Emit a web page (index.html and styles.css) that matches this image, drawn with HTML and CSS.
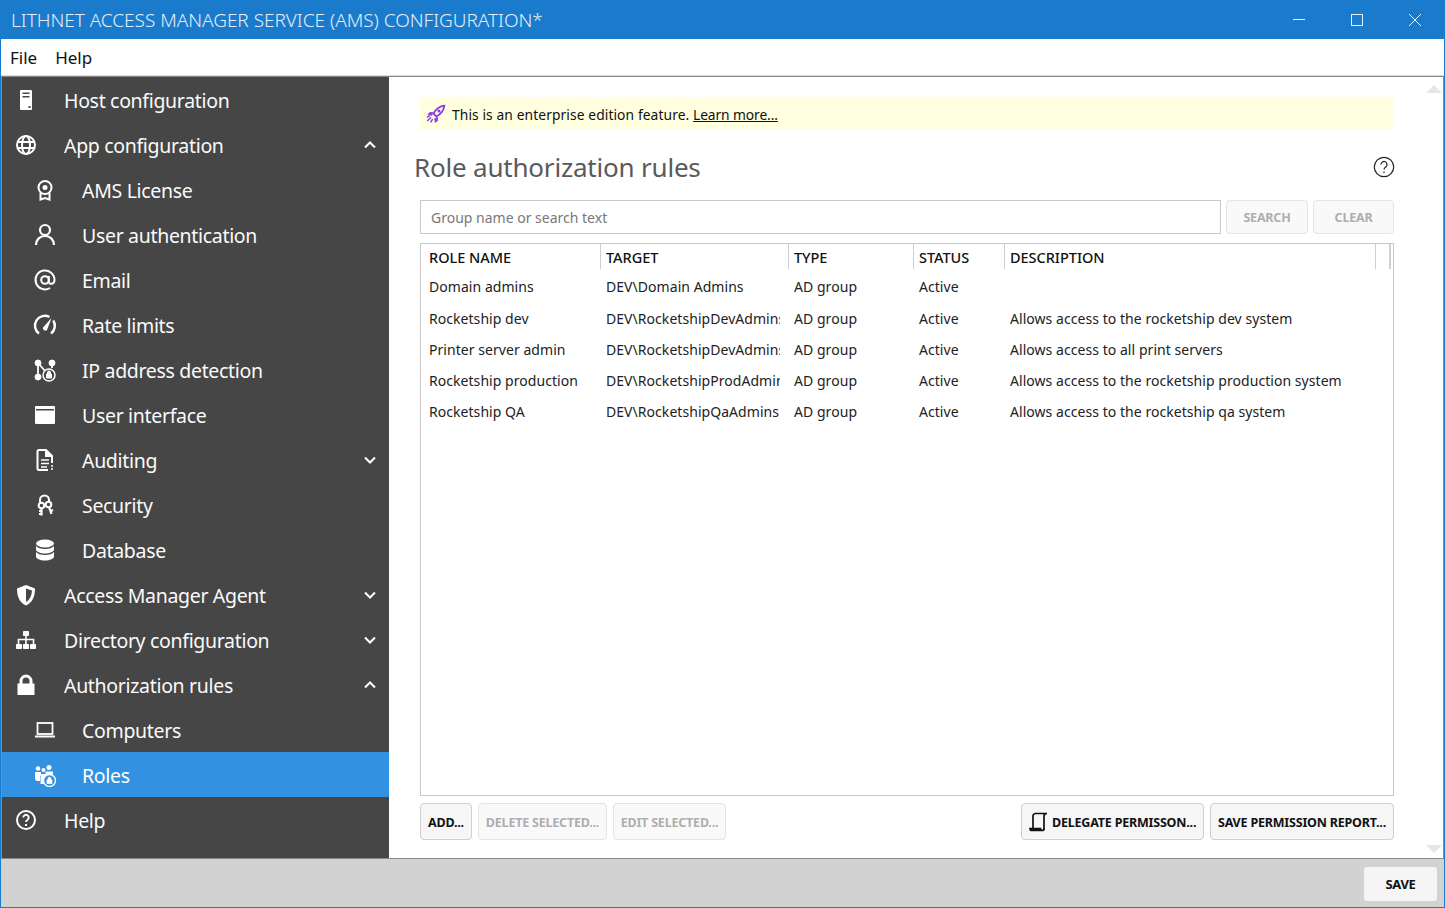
FILE: index.html
```html
<!DOCTYPE html>
<html lang="en">
<head>
  <meta charset="UTF-8">
  <title>Lithnet Access Manager Service (AMS) Configuration</title>
  <link rel="stylesheet" href="styles.css">
</head>
<body>
  <div class="window">
    <header class="titlebar">
      <span class="title">LITHNET ACCESS MANAGER SERVICE (AMS) CONFIGURATION*</span>
      <div class="window-btns">
        <svg width="58" height="40" viewBox="0 0 58 40"><path d="M23 19.500h12" stroke="#e6f0fa" fill="none"/></svg>
        <svg width="58" height="40" viewBox="0 0 58 40"><rect x="23.500" y="14.500" width="11" height="11" stroke="#e6f0fa" fill="none"/></svg>
        <svg width="58" height="40" viewBox="0 0 58 40"><path d="M23 14l12 12M35 14L23 26" stroke="#e6f0fa" fill="none"/></svg>
      </div>
    </header>
    <nav class="menu"><span>File</span><span>Help</span></nav>

    <div class="frame">
      <aside class="sidebar">
        <div class="nav-row">
          <svg class="nav-icon" viewBox="0 0 24 24"><path fill="#fff" fill-rule="evenodd" d="M7 2h10a1 1 0 0 1 1 1v18a1 1 0 0 1-1 1H7a1 1 0 0 1-1-1V3a1 1 0 0 1 1-1zM8.500 4.500v1.500h7V4.500zM8.500 8v1.500h7V8zM14.500 18v2h2v-2z"/></svg>
          <span>Host configuration</span>
        </div>
        <div class="nav-row">
          <svg class="nav-icon" viewBox="0 0 24 24" fill="none" stroke="#fff" stroke-width="2"><circle cx="12" cy="12" r="9"/><ellipse cx="12" cy="12" rx="4" ry="9"/><path d="M3 9h18M3 15h18"/></svg>
          <span>App configuration</span>
          <svg class="chev" viewBox="0 0 14 10"><path d="M2 7.500l5-5 5 5" /></svg>
        </div>
        <div class="nav-row sub">
          <svg class="nav-icon" viewBox="0 0 24 24" fill="none" stroke="#fff" stroke-width="2"><circle cx="12" cy="9.500" r="6.500"/><circle cx="12" cy="9.500" r="2.500" fill="#fff" stroke="none"/><path d="M7.500 15v6.500l4.500-1.500 4.500 1.500V15"/></svg>
          <span>AMS License</span>
        </div>
        <div class="nav-row sub">
          <svg class="nav-icon" viewBox="0 0 24 24" fill="none" stroke="#fff" stroke-width="2.200"><circle cx="12" cy="7" r="5"/><path d="M3 22c0-5 3.500-9 9-9s9 4 9 9"/></svg>
          <span>User authentication</span>
        </div>
        <div class="nav-row sub">
          <svg class="nav-icon" viewBox="0 0 24 24" fill="none" stroke="#fff" stroke-width="2"><circle cx="12" cy="12" r="3.800"/><path d="M15.800 8v5.500c0 3.500 5.700 3 5.700-1.500a9.500 9.500 0 1 0-4.500 8"/></svg>
          <span>Email</span>
        </div>
        <div class="nav-row sub">
          <svg class="nav-icon" viewBox="0 0 24 24" fill="none" stroke="#fff" stroke-width="2.400"><path d="M6 20.500a9.800 9.800 0 0 1 10.500-16.500M20.300 7.500a9.800 9.800 0 0 1-2.300 13"/><path d="M10 14.500L18.500 5l-4.500 12a2.500 2.500 0 0 1-4-2.500z" fill="#fff" stroke="none"/></svg>
          <span>Rate limits</span>
        </div>
        <div class="nav-row sub">
          <svg class="nav-icon" viewBox="0 0 24 24" fill="#fff" stroke="#fff"><circle cx="5" cy="5" r="3"/><circle cx="19" cy="5" r="3"/><circle cx="5" cy="19" r="3"/><path d="M5 5v14M5 5l8 9M19 5v5" stroke-width="1.800" fill="none"/><circle cx="16" cy="17" r="6" fill="#464646" stroke-width="1.500"/><path d="M13.500 16h5v4h-5zM14.500 16v-1.500a1.500 1.500 0 0 1 3 0V16" stroke-width="1"/></svg>
          <span>IP address detection</span>
        </div>
        <div class="nav-row sub">
          <svg class="nav-icon" viewBox="0 0 24 24"><path fill="#fff" fill-rule="evenodd" d="M3 3h18a1 1 0 0 1 1 1v16a1 1 0 0 1-1 1H3a1 1 0 0 1-1-1V4a1 1 0 0 1 1-1zM3 6v1.500h18V6z"/></svg>
          <span>User interface</span>
        </div>
        <div class="nav-row sub">
          <svg class="nav-icon" viewBox="0 0 24 24" fill="none" stroke="#fff" stroke-width="2"><path d="M15 22H6a1.500 1.500 0 0 1-1.500-1.500v-17A1.500 1.500 0 0 1 6 2h7l6 6v7"/><path d="M13 2v6h6" fill="#fff"/><path d="M8 12h8M8 15.500h8M8 19h6M18 18h2M18 21h2" stroke-width="1.600"/></svg>
          <span>Auditing</span>
          <svg class="chev" viewBox="0 0 14 10"><path d="M2 2.500l5 5 5-5"/></svg>
        </div>
        <div class="nav-row sub">
          <svg class="nav-icon" viewBox="0 0 24 24" fill="none" stroke="#fff" stroke-width="2"><path d="M7 10V7a4.500 4.500 0 0 1 9 0v2"/><circle cx="8.500" cy="12.500" r="2.800"/><path d="M8.500 15v7.500M8.500 18h-2.500M8.500 21h-2.500" stroke-width="2.200"/><circle cx="15.500" cy="11.500" r="2.800"/><path d="M16 14l2.500 7M17.500 18l2.500-1" stroke-width="2.200"/></svg>
          <span>Security</span>
        </div>
        <div class="nav-row sub">
          <svg class="nav-icon" viewBox="0 0 24 24" fill="#fff"><ellipse cx="12" cy="5.500" rx="9" ry="4"/><path d="M3 8v3.500c0 2.200 4 4 9 4s9-1.800 9-4V8c-1.500 2-5 3-9 3s-7.500-1-9-3zM3 14v4.500c0 2.200 4 4 9 4s9-1.800 9-4V14c-1.500 2-5 3-9 3s-7.500-1-9-3z"/></svg>
          <span>Database</span>
        </div>
        <div class="nav-row">
          <svg class="nav-icon" viewBox="0 0 24 24"><path fill="#fff" fill-rule="evenodd" d="M12 2l9 3.500c0 7-2 14-9 17-7-3-9-10-9-17zM12 5.500v13.500c4.500-2.500 5.700-7.500 6-11.500z"/></svg>
          <span>Access Manager Agent</span>
          <svg class="chev" viewBox="0 0 14 10"><path d="M2 2.500l5 5 5-5"/></svg>
        </div>
        <div class="nav-row">
          <svg class="nav-icon" viewBox="0 0 24 24" fill="#fff"><rect x="9" y="3" width="6" height="5" rx=".7"/><rect x="2" y="16" width="6" height="5" rx=".7"/><rect x="9" y="16" width="6" height="5" rx=".7"/><rect x="16" y="16" width="6" height="5" rx=".7"/><path d="M4.500 16v-4.500h15V16M12 8v8" fill="none" stroke="#fff" stroke-width="1.600"/></svg>
          <span>Directory configuration</span>
          <svg class="chev" viewBox="0 0 14 10"><path d="M2 2.500l5 5 5-5"/></svg>
        </div>
        <div class="nav-row">
          <svg class="nav-icon" viewBox="0 0 24 24"><path fill="#fff" d="M3.500 10.500h2V8a6.500 6.500 0 0 1 13 0v2.500h2V22h-17zM8.500 10.500h7V8a3.500 3.500 0 0 0-7 0z"/></svg>
          <span>Authorization rules</span>
          <svg class="chev" viewBox="0 0 14 10"><path d="M2 7.500l5-5 5 5"/></svg>
        </div>
        <div class="nav-row sub">
          <svg class="nav-icon" viewBox="0 0 24 24" fill="none" stroke="#fff" stroke-width="1.800"><rect x="4.500" y="5" width="15" height="11"/><path d="M2 18.500h20" stroke-width="2"/></svg>
          <span>Computers</span>
        </div>
        <div class="nav-row sub active">
          <svg class="nav-icon" viewBox="0 0 24 24" fill="#fff"><circle cx="5" cy="5.500" r="2.300"/><circle cx="16" cy="4.500" r="2.500"/><circle cx="10.500" cy="7" r="2"/><path d="M2 9h6v3l-1 1v5H3.500L2 16zM12.500 8.500h7.500v3h-7.500z"/><path d="M7.500 11h7v10h-7z"/><circle cx="16.500" cy="17.500" r="6" fill="#3291e0" stroke="#fff" stroke-width="1.400"/><path d="M14 17h5v3.500h-5zM15 17v-1.200a1.500 1.500 0 0 1 3 0V17" stroke="#fff" stroke-width=".8"/></svg>
          <span>Roles</span>
        </div>
        <div class="nav-row">
          <svg class="nav-icon" viewBox="0 0 24 24" fill="none" stroke="#fff" stroke-width="2"><circle cx="12" cy="12" r="9"/><path d="M9.300 9.500a2.700 2.700 0 1 1 4.300 2.200c-1 .7-1.600 1.200-1.600 2.300" stroke-width="1.900"/><path d="M12 16v2" stroke-width="2"/></svg>
          <span>Help</span>
        </div>
      </aside>

      <main class="pane">
        <div class="content">
          <div class="banner">
            <svg class="rocket" viewBox="0 0 24 24" fill="none" stroke="#8a3fe6" stroke-width="2.200"><path d="M9 11.500C12 6 16.500 2.500 22 2c-.5 5.500-4 10-9.500 13z"/><circle cx="15.500" cy="8.500" r="1.800" fill="#8a3fe6" stroke="none"/><path d="M8.500 10L4 10.500 2.500 13l5 .5M14 16l-.5 4.500-2.500 1.500-.5-5" fill="#8a3fe6" stroke-width="1"/><path d="M6 16l-4.500 4.500M8 18l-2.500 4M4.500 14L1 16" stroke-width="1.800"/></svg>
            <span class="banner-text">This is an enterprise edition feature. <a class="learn" href="#">Learn more...</a></span>
          </div>

          <div class="heading">
            <h1>Role authorization rules</h1>
            <svg class="help-icon" viewBox="0 0 22 22" fill="none" stroke="#222" stroke-width="1.200"><circle cx="11" cy="11" r="9.700"/><path d="M8 8.500a3 3 0 1 1 4.800 2.400c-1.100.8-1.800 1.300-1.800 2.600M11 15.500v1.500"/></svg>
          </div>

          <div class="search-row">
            <div class="search-box">Group name or search text</div>
            <button class="btn disabled search-btn">SEARCH</button>
            <button class="btn disabled clear-btn">CLEAR</button>
          </div>

          <div class="grid">
            <div class="grid-head">
              <div class="cell">ROLE NAME</div>
              <div class="cell">TARGET</div>
              <div class="cell">TYPE</div>
              <div class="cell">STATUS</div>
              <div class="cell">DESCRIPTION</div>
              <div class="cell"></div>
            </div>
            <div class="grid-row first">
              <div class="cell">Domain admins</div>
              <div class="cell">DEV\Domain Admins</div>
              <div class="cell">AD group</div>
              <div class="cell">Active</div>
              <div class="cell"></div>
            </div>
            <div class="grid-row">
              <div class="cell">Rocketship dev</div>
              <div class="cell">DEV\RocketshipDevAdmins</div>
              <div class="cell">AD group</div>
              <div class="cell">Active</div>
              <div class="cell">Allows access to the rocketship dev system</div>
            </div>
            <div class="grid-row">
              <div class="cell">Printer server admin</div>
              <div class="cell">DEV\RocketshipDevAdmins</div>
              <div class="cell">AD group</div>
              <div class="cell">Active</div>
              <div class="cell">Allows access to all print servers</div>
            </div>
            <div class="grid-row">
              <div class="cell">Rocketship production</div>
              <div class="cell">DEV\RocketshipProdAdmins</div>
              <div class="cell">AD group</div>
              <div class="cell">Active</div>
              <div class="cell">Allows access to the rocketship production system</div>
            </div>
            <div class="grid-row">
              <div class="cell">Rocketship QA</div>
              <div class="cell">DEV\RocketshipQaAdmins</div>
              <div class="cell">AD group</div>
              <div class="cell">Active</div>
              <div class="cell">Allows access to the rocketship qa system</div>
            </div>
          </div>

          <div class="actions">
            <button class="btn add-btn">ADD...</button>
            <button class="btn disabled del-btn">DELETE SELECTED...</button>
            <button class="btn disabled edit-btn">EDIT SELECTED...</button>
            <button class="btn delegate-btn">
              <svg class="scroll-icon" viewBox="0 0 20 20" fill="none" stroke="#111" stroke-width="1.700"><path d="M4 16V4a2.500 2.500 0 0 1 2.500-2.500H18M15 18V4c0-1.500 1-2.500 3-2.500"/><path d="M1 16.500h10.500c0 1 .5 2 1.500 2H3c-1.200 0-2-.8-2-2z" fill="#111"/><path d="M13 18.500c1.300 0 2-.8 2-2"/></svg>
              DELEGATE PERMISSON...
            </button>
            <button class="btn report-btn">SAVE PERMISSION REPORT...</button>
          </div>
        </div>
        <div class="scroll-col">
          <span class="arrow up"></span>
          <span class="arrow down"></span>
        </div>
      </main>
    </div>

    <footer class="footer">
      <button class="save-btn">SAVE</button>
    </footer>
  </div>
</body>
</html>
```

FILE: styles.css
```css
* {
  box-sizing: border-box;
}
body {
  margin: 0;
  font-family: "Noto Sans", "Open Sans", sans-serif;
  background: #fff;
  overflow: hidden;
}
.window {
  width: 1445px;
  height: 908px;
  display: flex;
  flex-direction: column;
  border: 1px solid #1a7acb;
  border-top: 0;
}

/* title bar */
.titlebar {
  height: 39px;
  margin: 0 -1px;
  padding-left: 11px;
  padding-right: 1px;
  background: #1a7acb;
  color: #e3eef9;
  display: flex;
  align-items: center;
  justify-content: space-between;
  flex-shrink: 0;
}
.title {
  font-size: 19px;
  font-weight: 300;
  letter-spacing: -0.03px;
  white-space: nowrap;
}
.window-btns {
  display: flex;
}
.window-btns svg {
  display: block;
}

.menu {
  height: 37px;
  flex-shrink: 0;
  padding-left: 9px;
  display: flex;
  align-items: center;
  gap: 18px;
  font-size: 17px;
  color: #111;
  background: #fff;
  border-bottom: 1px solid #d8d8d8;
}

.frame {
  flex: 1;
  min-height: 0;
  display: flex;
  border: 1px solid #8a8a8a;
}

/* sidebar */
.sidebar {
  width: 387px;
  flex-shrink: 0;
  background: #464646;
  color: #fafafa;
}
.nav-row {
  height: 45px;
  display: flex;
  align-items: center;
  padding-left: 12px;
  padding-right: 12px;
  font-size: 19.500px;
  letter-spacing: -0.32px;
}
.nav-row span {
  margin-top: 2px;
}
.nav-row.sub {
  padding-left: 31px;
}
.nav-row.active {
  background: #3291e0;
  color: #fff;
}
.nav-icon {
  width: 24px;
  height: 24px;
  margin-right: 26px;
  flex-shrink: 0;
}
.sub .nav-icon {
  margin-right: 25px;
}
.chev {
  width: 14px;
  height: 10px;
  margin-left: auto;
  fill: none;
  stroke: #fff;
  stroke-width: 2;
}

/* right pane */
.pane {
  flex: 1;
  min-width: 0;
  display: flex;
  background: #fff;
}
.content {
  width: 1005px;
  padding: 20px 0 18px 31px;
  display: flex;
  flex-direction: column;
}
.banner {
  height: 33px;
  flex-shrink: 0;
  background: #ffffe0;
  display: flex;
  align-items: center;
  padding-left: 6px;
  font-size: 13.800px;
  color: #111;
}
.banner-text {
  margin-top: 2px;
  letter-spacing: 0.1px;
}
.rocket {
  width: 20px;
  height: 20px;
  margin-right: 6px;
}
.learn {
  color: #111;
  text-decoration: underline;
  letter-spacing: -0.1px;
}
.heading {
  height: 70px;
  flex-shrink: 0;
  display: flex;
  align-items: center;
  justify-content: space-between;
  margin-left: -6px;
}
.heading h1 {
  margin: 4px 0 0;
  font-size: 26px;
  font-weight: 400;
  letter-spacing: -0.2px;
  color: #5a5a5a;
}
.help-icon {
  width: 22px;
  height: 22px;
  margin: 4px -1px 0 0;
}

.search-row {
  display: flex;
  gap: 5px;
  flex-shrink: 0;
}
.search-box {
  flex: 1;
  height: 34px;
  padding-left: 10px;
  border: 1px solid #c8c8c8;
  display: flex;
  align-items: center;
  font-size: 14px;
  color: #787878;
}

.btn {
  height: 34px;
  padding: 0;
  border: 1px solid #cfcfcf;
  border-radius: 4px;
  background: #f6f6f6;
  font-family: inherit;
  font-size: 12.500px;
  font-weight: 700;
  letter-spacing: -0.2px;
  color: #111;
  white-space: nowrap;
}
.btn.disabled {
  border-color: #e4e4e4;
  background: #f9f9f9;
  color: #aeaeae;
}
.search-btn {
  width: 82px;
}
.clear-btn {
  width: 81px;
}

/* role table */
.grid {
  flex: 1;
  min-height: 0;
  margin-top: 9px;
  border: 1px solid #c8c8c8;
  font-size: 14px;
  color: #222;
}
.grid-head,
.grid-row {
  display: grid;
  grid-template-columns: 180px 188px 125px 91px 371px 15px;
}
.grid-head {
  height: 25px;
  font-weight: 500;
  color: #111;
}
.grid-head .cell {
  height: 25px;
  padding-left: 8px;
  border-right: 1px solid #cfcfcf;
  line-height: 26px;
  font-size: 14.500px;
  letter-spacing: -0.03px;
}
.grid-head .cell:nth-child(n+2) {
  padding-left: 5px;
}
.grid-head .cell:last-child {
  border-right: 2px solid #cfcfcf;
}
.grid-row {
  height: 31px;
  align-items: center;
}
.grid-row.first {
  height: 34px;
}
.grid-row .cell {
  padding-left: 8px;
  white-space: nowrap;
  overflow: hidden;
  letter-spacing: 0.05px;
}
.grid-row .cell:nth-child(n+2) {
  padding-left: 5px;
}
.grid-row .cell:nth-child(2) {
  margin-right: 9px;
}

.actions {
  display: flex;
  gap: 6px;
  margin-top: 7px;
  flex-shrink: 0;
}
.actions .btn {
  height: 37px;
  padding-top: 2px;
}
.add-btn {
  width: 52px;
}
.del-btn {
  width: 129px;
}
.edit-btn {
  width: 113px;
}
.delegate-btn {
  width: 183px;
  margin-left: auto;
  display: flex;
  align-items: center;
  padding-left: 7px;
}
.report-btn {
  width: 184px;
}
.scroll-icon {
  width: 20px;
  height: 20px;
  margin: -2px 3px 0 0;
}

.scroll-col {
  flex: 1;
  padding: 8px 1px 5px 0;
  display: flex;
  flex-direction: column;
  align-items: flex-end;
  justify-content: space-between;
}
.arrow {
  width: 0;
  height: 0;
  border-left: 8px solid transparent;
  border-right: 8px solid transparent;
}
.arrow.up {
  border-bottom: 8px solid #e6e6e6;
}
.arrow.down {
  border-top: 8px solid #e6e6e6;
}

/* footer */
.footer {
  height: 48px;
  flex-shrink: 0;
  background: #d2d2d2;
  display: flex;
  align-items: center;
  justify-content: flex-end;
  padding-right: 7px;
}
.save-btn {
  width: 73px;
  height: 34px;
  margin-top: 2px;
  padding-top: 1px;
  border: 0;
  border-radius: 3px;
  background: #f5f5f5;
  font-family: inherit;
  font-size: 13px;
  font-weight: 700;
  letter-spacing: -0.3px;
  color: #111;
}
```
